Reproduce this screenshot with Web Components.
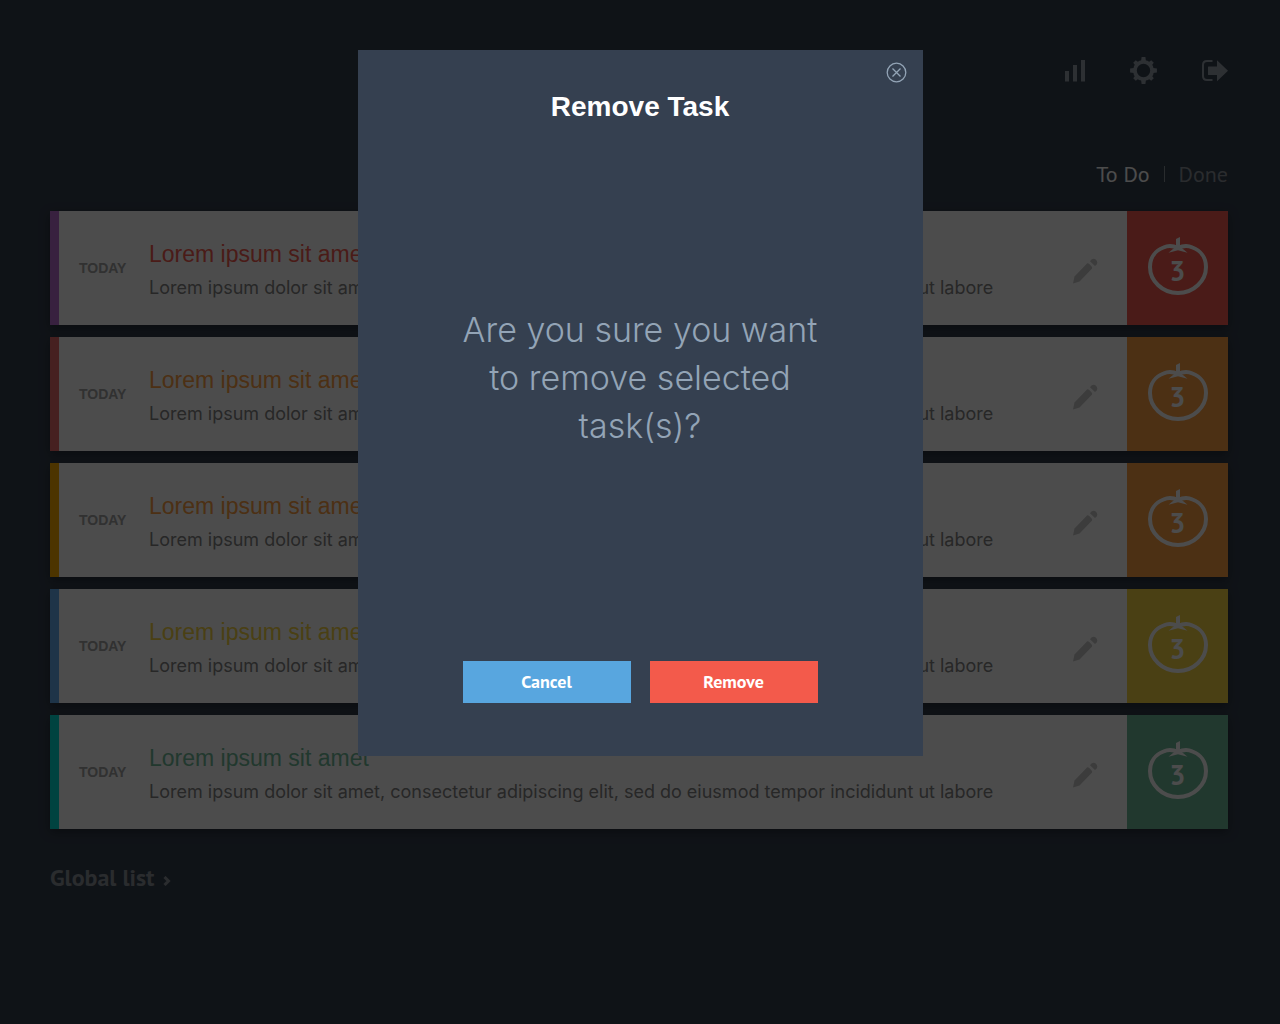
<!DOCTYPE html>
<html lang="en">
<head>
<meta charset="utf-8">
<title>Remove Task</title>
<style>
  body { margin: 0; min-height: 100vh; background: #35404f; font-family: "Liberation Sans", Arial, sans-serif; }
</style>
</head>
<body>
<pomodoro-app></pomodoro-app>
<script>
const HUMANIST = '"PT Sans", "Noto Sans", sans-serif';

function define(name, html) {
  const template = document.createElement('template');
  template.innerHTML = html;
  customElements.define(name, class extends HTMLElement {
    constructor() {
      super();
      this.attachShadow({ mode: 'open' }).append(template.content.cloneNode(true));
    }
  });
}

define('app-toolbar', `
<style>
  :host { display: block; }
  nav { display: flex; justify-content: flex-end; align-items: center; gap: 43px; height: 28px; }
  a { display: block; height: 28px; color: #98a2ac; }
  svg { display: block; fill: currentColor; }
</style>
<nav aria-label="Main">
  <a href="#reports" aria-label="Reports"><svg width="22" height="28" viewBox="0 0 22 28"><path d="M0 14h4v10.500H0zM8 8h4v16.500H8zM16 3h4v21.500h-4z"/></svg></a>
  <a href="#settings" aria-label="Settings"><svg width="27" height="28" viewBox="-13.500 -13.500 27 28">
    <circle r="8.600" fill="none" stroke="currentColor" stroke-width="3.800"/>
    <path id="teeth" d="M-2.400 -9.500L-1.900 -13.400H1.900L2.400 -9.500zM-2.400 9.500L-1.900 13.400H1.900L2.400 9.500zM-9.500 -2.400L-13.400 -1.900V1.900L-9.500 2.400zM9.500 -2.400L13.400 -1.900V1.900L9.500 2.400z"/>
    <use href="#teeth" transform="rotate(45) scale(.95)"/></svg></a>
  <a href="#logout" aria-label="Log out"><svg width="28" height="28" viewBox="0 0 28 28"><path d="M8.500 9.500H17V3.200L28 13.700 17 24.200V18H8.500Q8 18 8 17.500V10Q8 9.500 8.500 9.500z"/><path d="M12.500 4H7Q3 4 3 8V19Q3 23 7 23H12.500" fill="none" stroke="currentColor" stroke-width="2"/></svg></a>
</nav>`);

define('list-tabs', `
<style>
  :host { display: block; font-family: ${HUMANIST}; font-size: 22px; line-height: 30px; }
  nav { display: flex; justify-content: flex-end; align-items: center; gap: 14px; }
  a { color: #8c939b; text-decoration: none; }
  a[aria-current] { color: #fff; }
  i { width: 1px; height: 16px; background: #8b939c; }
</style>
<nav aria-label="Lists"><a href="#todo" aria-current="page">To Do</a><i></i><a href="#done">Done</a></nav>`);

define('tomato-badge', `
<style>
  :host { display: grid; place-items: center; width: 101px; color: #fff; }
  svg, span { grid-area: 1 / 1; }
  svg { display: block; margin-bottom: 4px; }
  span { padding-top: 6px; font: 700 28px/36px ${HUMANIST}; font-variant-numeric: lining-nums; }
</style>
<svg width="60" height="58" viewBox="0 0 60 58" aria-hidden="true">
  <path d="M30 11C25 8.700 20 8.500 15.500 10.500C7.500 13.500 2 20.500 2 30C2 44 14.500 56 30 56S58 44 58 30C58 20.500 52.500 13.500 44.500 10.500C40 8.500 35 8.700 30 11Z" fill="none" stroke="currentColor" stroke-width="4"/>
  <path d="M28 2L32 0V9.500L39.500 15.800L30 13.200L20.500 15.800L28 9.500Z" fill="currentColor"/>
</svg>
<span><slot></slot></span>`);

define('task-card', `
<style>
  :host { display: flex; align-items: stretch; min-height: 114px; background: #fff; box-shadow: 0 3px 10px rgba(0, 0, 0, .35); }
  .label { flex: none; width: 9px; background: var(--label); }
  .due { flex: none; align-self: center; width: 50px; padding-left: 20px; font-size: 14px; font-weight: 700; line-height: 20px; color: #a4a4a4; }
  .body { flex: 1; align-self: center; min-width: 0; padding: 5px 0 0 20px; }
  h2 { margin: 0; font-size: 23px; font-weight: 400; line-height: 34px; color: var(--priority); }
  p { margin: 0; font-family: Inter, "Liberation Sans", sans-serif; font-weight: 400; font-size: 18px; line-height: 34px; color: #848484; }
  button { flex: none; display: grid; place-items: center; width: 84px; padding: 6px 0 0; border: 0; background: none; color: #c8c8c8; }
  svg { display: block; fill: currentColor; }
  tomato-badge { flex: none; background: var(--priority); }
</style>
<div class="label"></div>
<div class="due"><slot name="due"></slot></div>
<div class="body"><h2><slot name="title"></slot></h2><p><slot></slot></p></div>
<button type="button" aria-label="Edit task"><svg width="25" height="26" viewBox="0 0 25 26"><path d="M0 25.500L1.500 18.500L14 5.500Q15 4.800 16 5.800L18.800 8.800Q19.600 9.800 18.800 10.800L6.500 23.500Z"/><path d="M17 3.200L18.500 1.600Q20.800 -.3 23 1.800Q25.200 4.300 23.600 6.400L22 8Z"/></svg></button>
<tomato-badge><slot name="count"></slot></tomato-badge>`);

define('remove-dialog', `
<style>
  :host { position: fixed; inset: 0; display: flex; justify-content: center; align-items: flex-start; padding: 50px 20px; background: rgba(0, 0, 0, .7); }
  dialog { position: relative; display: flex; flex-direction: column; align-items: center; box-sizing: border-box; margin: 0; width: 565px; min-height: 706px; padding: 37px 32px 53px; border: 0; background: #354050; color: #fff; }
  .close { position: absolute; top: 12px; right: 16px; padding: 0; border: 0; background: none; color: #93a4b6; }
  svg { display: block; fill: none; stroke: currentColor; stroke-width: 1.300; }
  h1 { margin: 0; font-size: 28px; line-height: 40px; }
  p { flex: 1; margin: 0; padding-top: 179px; max-width: 380px; font-family: Inter, "Liberation Sans", sans-serif; font-size: 34px; font-weight: 300; line-height: 48px; text-align: center; color: #93a4b6; }
  .actions { display: flex; gap: 19px; }
  .actions button { width: 168px; height: 42px; padding: 0; border: 0; font: 700 18px/24px ${HUMANIST}; color: #fff; }
  .cancel { background: #58a6df; }
  .remove { background: #f35a4b; }
</style>
<dialog open aria-labelledby="heading">
  <button class="close" type="button" aria-label="Close"><svg width="21" height="21" viewBox="0 0 21 21"><circle cx="10.500" cy="10.500" r="9.300"/><path d="M6.500 6.500l8 8M14.500 6.500l-8 8"/></svg></button>
  <h1 id="heading">Remove Task</h1>
  <p>Are you sure you want to remove selected task(s)?</p>
  <div class="actions"><button class="cancel" type="button">Cancel</button><button class="remove" type="button">Remove</button></div>
</dialog>`);

const tasks = [
  ['#bb70d4', '#f75d50'],
  ['#e96b6b', '#fda044'],
  ['#fdad00', '#fda044'],
  ['#64adf0', '#f7d543'],
  ['#00e0d8', '#71bb99']
].map(([label, priority]) => `
  <task-card style="--label: ${label}; --priority: ${priority}">
    <span slot="due">TODAY</span>
    <span slot="title">Lorem ipsum sit amet</span>
    Lorem ipsum dolor sit amet, consectetur adipiscing elit, sed do eiusmod tempor incididunt ut labore
    <span slot="count">3</span>
  </task-card>`).join('');

define('pomodoro-app', `
<style>
  :host { display: block; padding: 57px 52px 40px 50px; }
  list-tabs { margin-top: 74px; }
  main { display: flex; flex-direction: column; gap: 12px; margin-top: 22px; }
  .global { display: inline-flex; align-items: center; gap: 9px; margin-top: 33px; font: 700 24px/32px ${HUMANIST}; color: #8c939b; text-decoration: none; }
  svg { display: block; margin-top: 6px; fill: none; stroke: currentColor; stroke-width: 3; }
</style>
<app-toolbar></app-toolbar>
<list-tabs></list-tabs>
<main>${tasks}</main>
<a class="global" href="#global">Global list <svg width="8" height="10" viewBox="0 0 8 10"><path d="M1.500 1l4 4-4 4"/></svg></a>
<remove-dialog></remove-dialog>`);
</script>
</body>
</html>
